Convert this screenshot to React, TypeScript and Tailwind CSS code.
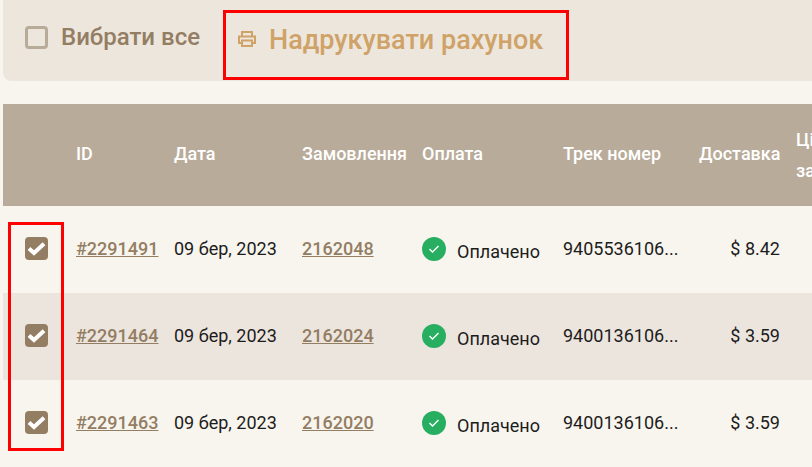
const rows = [
  { id: "#2291491", order: "2162048", track: "9405536106...", price: "$ 8.42" },
  { id: "#2291464", order: "2162024", track: "9400136106...", price: "$ 3.59" },
  { id: "#2291463", order: "2162020", track: "9400136106...", price: "$ 3.59" },
];

const cols = "grid grid-cols-[73px_98px_128px_120px_141px_136px_1fr] items-center";

function Checked() {
  return (
    <span className="flex h-[23px] w-[23px] items-center justify-center rounded-[4px] bg-[#937d63]">
      <svg width="19" height="15" viewBox="0 0 19 15" fill="none">
        <path d="M2 7.5 L7 12 L17 2.8" stroke="#fff" strokeWidth="4" />
      </svg>
    </span>
  );
}

export default function App() {
  return (
    <div className="relative h-[467px] w-[812px] overflow-hidden bg-[#f8f5ee] pl-[3px] font-['Roboto',sans-serif]">
      {/* top bar */}
      <div className="flex h-[81px] items-start rounded-bl-[8px] bg-[#ede6dd]">
        <div className="ml-[22px] mt-[24px] flex items-center gap-[13px]">
          <span className="h-[23px] w-[23px] rounded-[4px] border-[3px] border-[#b9ab99]" />
          <span className="text-[24px] font-medium leading-[26px] text-[#937d63]">Вибрати все</span>
        </div>
        <div className="ml-[37px] mt-[25px] flex items-center gap-[12px]">
          <svg className="-mt-[2px]" width="20" height="18" viewBox="0 0 20 18" fill="none" stroke="#cfa268" strokeWidth="2">
            <path d="M5 6V2h10v4" />
            <path d="M5 13H2V6.5h16V13h-3" />
            <path d="M5 10.5h10V16H5z" />
          </svg>
          <span className="text-[27px] font-medium leading-[30px] text-[#cfa268]">Надрукувати рахунок</span>
        </div>
      </div>

      {/* table head */}
      <div className={`${cols} mt-[23px] h-[102px] bg-[#b9ab99] pb-[4px] text-[18px] font-medium text-white`}>
        <span />
        <span>ID</span>
        <span>Дата</span>
        <span className="whitespace-nowrap">Замовлення</span>
        <span>Оплата</span>
        <span>Трек номер</span>
        <div className="flex items-center gap-[16px]">
          <span className="w-[81px] text-right">Доставка</span>
          <span className="mt-[4px] leading-[31px] whitespace-nowrap">Ціна<br />за</span>
        </div>
      </div>

      {/* rows */}
      {rows.map((r, i) => (
        <div key={r.id} className={`${cols} h-[87px] pb-[2px] text-[18px] text-[#1c1c1c] ${i === 1 ? "bg-[#ece5de]" : ""}`}>
          <div className="pl-[22px]">
            <Checked />
          </div>
          <a className="font-medium text-[#937d63] underline">{r.id}</a>
          <span>09 бер, 2023</span>
          <a className="font-medium text-[#937d63] underline">{r.order}</a>
          <div className="flex items-center gap-[11px]">
            <span className="flex h-[24px] w-[24px] items-center justify-center rounded-full bg-[#27ae60]">
              <svg width="12" height="10" viewBox="0 0 12 10" fill="none">
                <path d="M1.5 5 L4.5 8 L10.5 2" stroke="#fff" strokeWidth="1.4" />
              </svg>
            </span>
            <span className="mt-[6px]">Оплачено</span>
          </div>
          <span>{r.track}</span>
          <span className="w-[81px] text-right">{r.price}</span>
        </div>
      ))}

      {/* red annotations */}
      <div className="absolute left-[223px] top-[10px] h-[70px] w-[346px] border-[3px] border-[#ff0000]" />
      <div className="absolute left-[8px] top-[222px] h-[229px] w-[56px] border-[3px] border-[#ff0000]" />
    </div>
  );
}
